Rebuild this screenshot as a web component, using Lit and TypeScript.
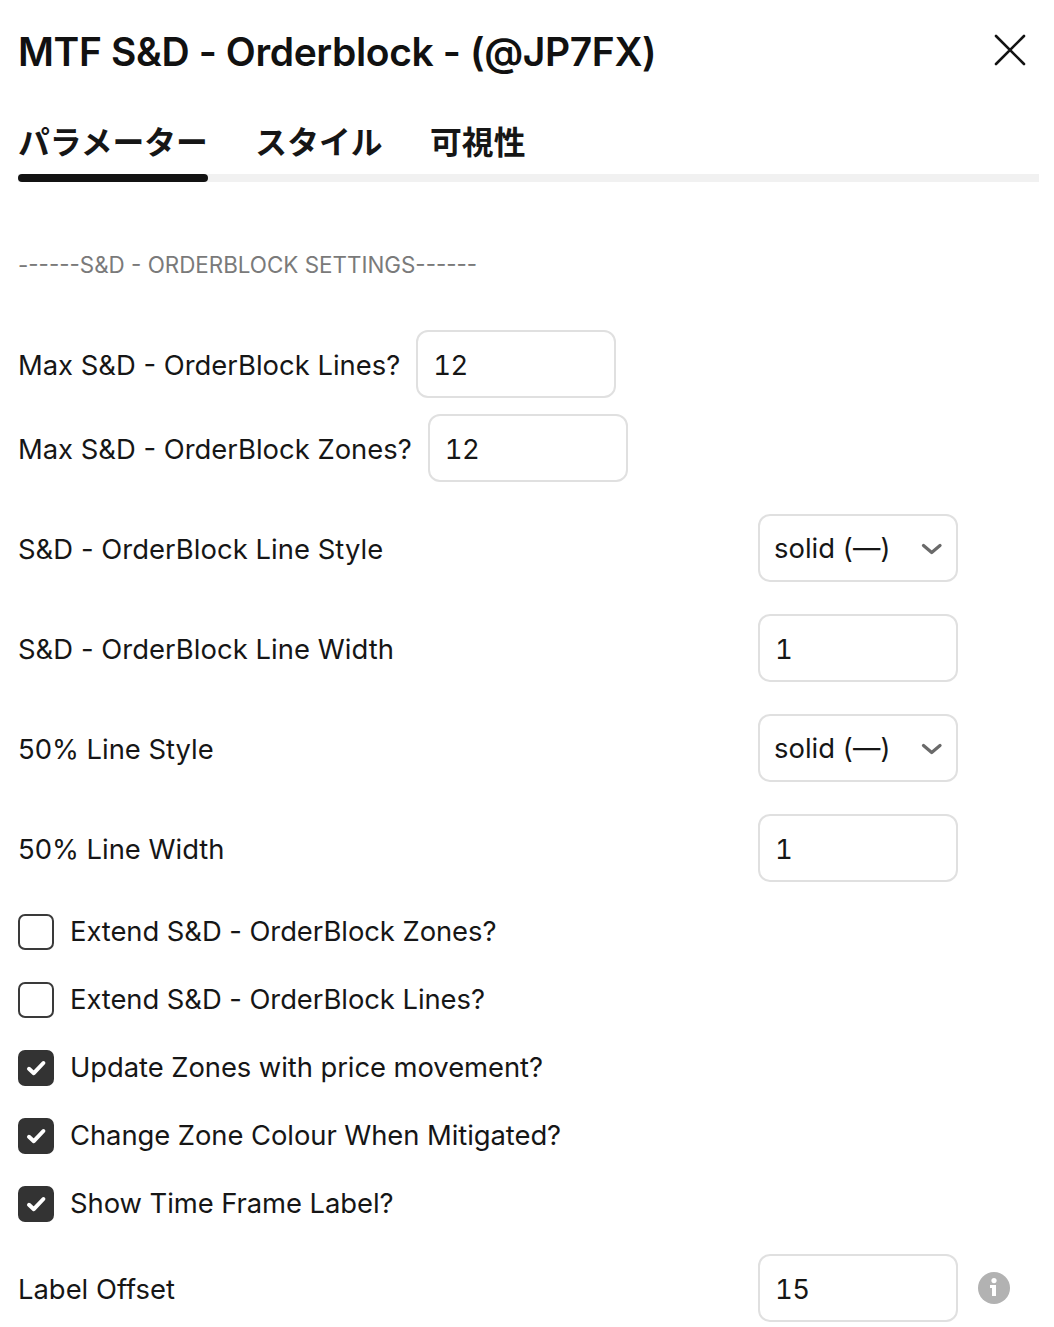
import { LitElement, html, css, svg } from "lit";
import { customElement } from "lit/decorators.js";

const check = html`<svg width="36" height="36" viewBox="0 0 36 36"><path d="M11 18.8l4.8 4.4L25.4 13" fill="none" stroke="#fff" stroke-width="4" stroke-linecap="round" stroke-linejoin="round"/></svg>`;
const chevron = html`<svg class="chev" width="22" height="14" viewBox="0 0 22 14"><path d="M3.5 4.5l8.2 7 8.3-7" fill="none" stroke="#6a6a6a" stroke-width="3.2" stroke-linecap="round" stroke-linejoin="round"/></svg>`;
const closeIcon = svg`<path d="M2 2l28 28M30 2L2 30" fill="none" stroke="#131313" stroke-width="2.6" stroke-linecap="round"/>`;

@customElement("app-root")
export class AppRoot extends LitElement {
  static styles = css`
    :host {
      display: block;
      width: 1054px;
      height: 1327px;
      overflow: hidden;
      background: #fff;
      color: #161616;
      font-family: Inter, "Noto Sans CJK JP", sans-serif;
      font-size: 27.4px;
      line-height: 36px;
      box-sizing: border-box;
      padding: 0 15px 0 18px;
    }
    .head { display: flex; justify-content: space-between; align-items: center; height: 104px; }
    h1 { margin: 0; font-size: 39px; font-weight: 600; line-height: 52px; letter-spacing: -0.38px; color: #111; }
    .close { display: block; margin: 0 13.3px 4.6px 0; }
    .tabs { display: flex; gap: 47.5px; height: 78px; padding-top: 16px; box-sizing: border-box;
      border-bottom: 8px solid #f1f1f1; font-size: 31.8px; font-weight: 600; line-height: 40px; font-family: "Noto Sans CJK JP", Inter, sans-serif; }
    .tab { position: relative; }
    .tab.on::after { content: ""; position: absolute; left: 0; right: 0; bottom: -8px; height: 8px; background: #131313; border-radius: 4px; }
    .sec { margin-top: 65px; height: 36px; font-size: 22.4px; color: #7a7a7a; }
    .rows { margin-top: 47px; }
    .row { display: flex; align-items: center; justify-content: space-between; height: 68px; margin-top: 32px; }
    .row.inl { justify-content: flex-start; gap: 16px; margin-top: 16px; }
    .row.inl.first { margin-top: 0; }
    .lab { white-space: nowrap; padding-top: 2px; }
    .wide { letter-spacing: 0.05px; }
    .ctl { width: 200px; height: 68px; box-sizing: border-box; border: 2px solid #e0e0e0; border-radius: 12px; display: flex; align-items: center; padding: 2px 16px 0 15px; flex: none; font-variant-numeric: tabular-nums; letter-spacing: -0.4px; }
    .ctl.sel { padding: 0 14px; justify-content: space-between; letter-spacing: 0; }
    .right { margin-right: 81px; }
    .checks { margin-top: 32px; display: flex; flex-direction: column; gap: 32px; }
    .chk { display: flex; align-items: center; gap: 16px; height: 36px; }
    .chk .lab { padding: 0 0 2px; letter-spacing: -0.06px; }
    .box { width: 36px; height: 36px; box-sizing: border-box; border: 2px solid #3a3a3a; border-radius: 7px; flex: none; }
    .box.on { background: #333; border: none; }
    .box svg { display: block; }
    .last { margin-top: 32px; }
    .rgt { display: flex; align-items: center; gap: 20px; margin-right: 29px; }
    .info { display: block; }
  `;

  private num(v: string, extra = "") {
    return html`<div class="ctl ${extra}">${v}</div>`;
  }
  private sel() {
    return html`<div class="ctl sel right"><span>solid (—)</span>${chevron}</div>`;
  }

  render() {
    const checks: [string, boolean][] = [
      ["Extend S&D - OrderBlock Zones?", false],
      ["Extend S&D - OrderBlock Lines?", false],
      ["Update Zones with price movement?", true],
      ["Change Zone Colour When Mitigated?", true],
      ["Show Time Frame Label?", true],
    ];
    return html`
      <div class="head">
        <h1>MTF S&amp;D - Orderblock - (@JP7FX)</h1>
        <svg class="close" width="32" height="32" viewBox="0 0 32 32">${closeIcon}</svg>
      </div>
      <div class="tabs">
        <div class="tab on">パラメーター</div>
        <div class="tab">スタイル</div>
        <div class="tab">可視性</div>
      </div>
      <div class="sec">------S&amp;D - ORDERBLOCK SETTINGS------</div>
      <div class="rows">
        <div class="row inl first"><span class="lab">Max S&amp;D - OrderBlock Lines?</span>${this.num("12")}</div>
        <div class="row inl"><span class="lab">Max S&amp;D - OrderBlock Zones?</span>${this.num("12")}</div>
        <div class="row"><span class="lab wide">S&amp;D - OrderBlock Line Style</span>${this.sel()}</div>
        <div class="row"><span class="lab wide">S&amp;D - OrderBlock Line Width</span>${this.num("1", "right")}</div>
        <div class="row"><span class="lab">50% Line Style</span>${this.sel()}</div>
        <div class="row"><span class="lab">50% Line Width</span>${this.num("1", "right")}</div>
      </div>
      <div class="checks">
        ${checks.map(
          ([t, on]) => html`<div class="chk"><div class="box ${on ? "on" : ""}">${on ? check : ""}</div><span class="lab">${t}</span></div>`
        )}
      </div>
      <div class="row last">
        <span class="lab">Label Offset</span>
        <div class="rgt">
          ${this.num("15")}
          <svg class="info" width="32" height="32" viewBox="0 0 32 32">
            <circle cx="16" cy="16" r="16" fill="#b2b2b2"/>
            <circle cx="16" cy="8.6" r="2.6" fill="#fff"/>
            <path d="M12 13h6v11h-4V16h-2z" fill="#fff"/>
          </svg>
        </div>
      </div>
    `;
  }
}
